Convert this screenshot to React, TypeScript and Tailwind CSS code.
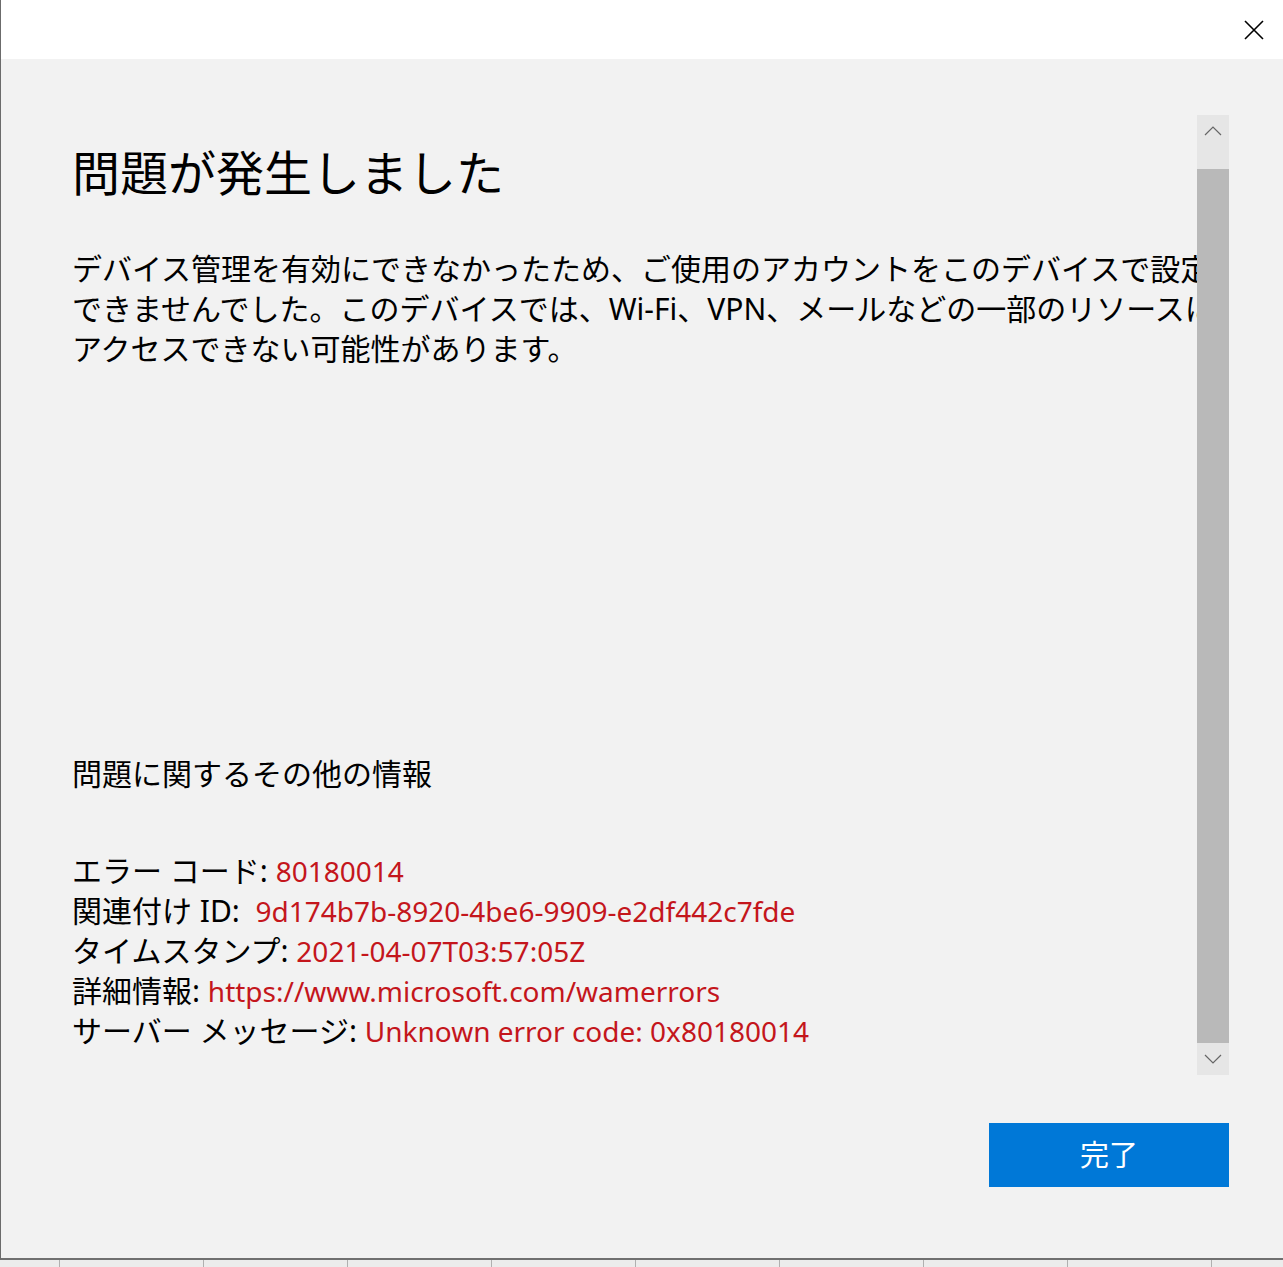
import React from 'react';

const font = { fontFamily: '"Noto Sans", "Noto Sans CJK JP", sans-serif' };

const details: { label: string; value: string }[] = [
    { label: 'エラー コード: ', value: '80180014' },
    { label: '関連付け ID:  ', value: '9d174b7b-8920-4be6-9909-e2df442c7fde' },
    { label: 'タイムスタンプ: ', value: '2021-04-07T03:57:05Z' },
    { label: '詳細情報: ', value: 'https://www.microsoft.com/wamerrors' },
    { label: 'サーバー メッセージ: ', value: 'Unknown error code: 0x80180014' },
];

const Chevron = ({ up }: { up?: boolean }) => (
    <svg width="18" height="10" viewBox="0 0 18 10" fill="none" stroke="#666" strokeWidth="1.2">
        {up ? <path d="M1 9 L9 1 L17 9" /> : <path d="M1 1 L9 9 L17 1" />}
    </svg>
);

export default function App() {
    return (
        <div className="w-[1283px] h-[1267px] flex flex-col bg-[#e8e8e8] overflow-hidden text-black" style={font}>
            {/* Dialog */}
            <div className="h-[1260px] shrink-0 flex flex-col border-l border-[#6b6b6b] border-b-2 border-b-[#707070]">
                {/* Title bar */}
                <div className="h-[59px] bg-white flex items-center justify-end pr-[18px]">
                    <svg width="22" height="22" viewBox="0 0 22 22" stroke="#000" strokeWidth="1.6">
                        <path d="M2 2 L20 20 M20 2 L2 20" />
                    </svg>
                </div>

                {/* Body */}
                <div className="flex-1 bg-[#f2f2f2] flex flex-col pt-[56px]">
                    <div className="h-[960px] flex pr-[54px]">
                        <div className="flex-1 overflow-hidden pl-[71px] pt-[28px] whitespace-nowrap">
                            <h1 className="text-[48px] leading-[60px] font-normal">問題が発生しました</h1>
                            <div className="mt-[46px] text-[30px] leading-[40px]">
                                <p>デバイス管理を有効にできなかったため、ご使用のアカウントをこのデバイスで設定</p>
                                <p>できませんでした。このデバイスでは、Wi-Fi、VPN、メールなどの一部のリソースに</p>
                                <p>アクセスできない可能性があります。</p>
                            </div>
                            <p className="mt-[385px] text-[30px] leading-[40px]">問題に関するその他の情報</p>
                            <div className="mt-[57px] flex flex-col">
                                {details.map((d) => (
                                    <div key={d.label} className="h-[40px] flex items-baseline whitespace-pre leading-[40px]">
                                        <span className="text-[30px]">{d.label}</span>
                                        <span className="text-[28px] text-[#c4161c]">{d.value}</span>
                                    </div>
                                ))}
                            </div>
                        </div>

                        {/* Scrollbar */}
                        <div className="w-[32px] bg-[#e6e6e6] flex flex-col">
                            <div className="h-[32px] flex items-center justify-center">
                                <Chevron up />
                            </div>
                            <div className="h-[22px]" />
                            <div className="flex-1 bg-[#b9b9b9]" />
                            <div className="h-[32px] flex items-center justify-center">
                                <Chevron />
                            </div>
                        </div>
                    </div>

                    {/* Footer */}
                    <div className="flex justify-end pr-[54px] mt-[48px]">
                        <button className="w-[240px] h-[64px] bg-[#0078d7] text-white text-[29px] flex items-center justify-center">
                            完了
                        </button>
                    </div>
                </div>
            </div>

            {/* Background window peeking out below */}
            <div className="flex-1 flex bg-[#ececec]">
                <div className="w-[60px] shrink-0 border-r border-[#b0b0b0]" />
                {Array.from({ length: 9 }).map((_, i) => (
                    <div key={i} className="w-[144px] shrink-0 border-r border-[#b0b0b0]" />
                ))}
            </div>
        </div>
    );
}
